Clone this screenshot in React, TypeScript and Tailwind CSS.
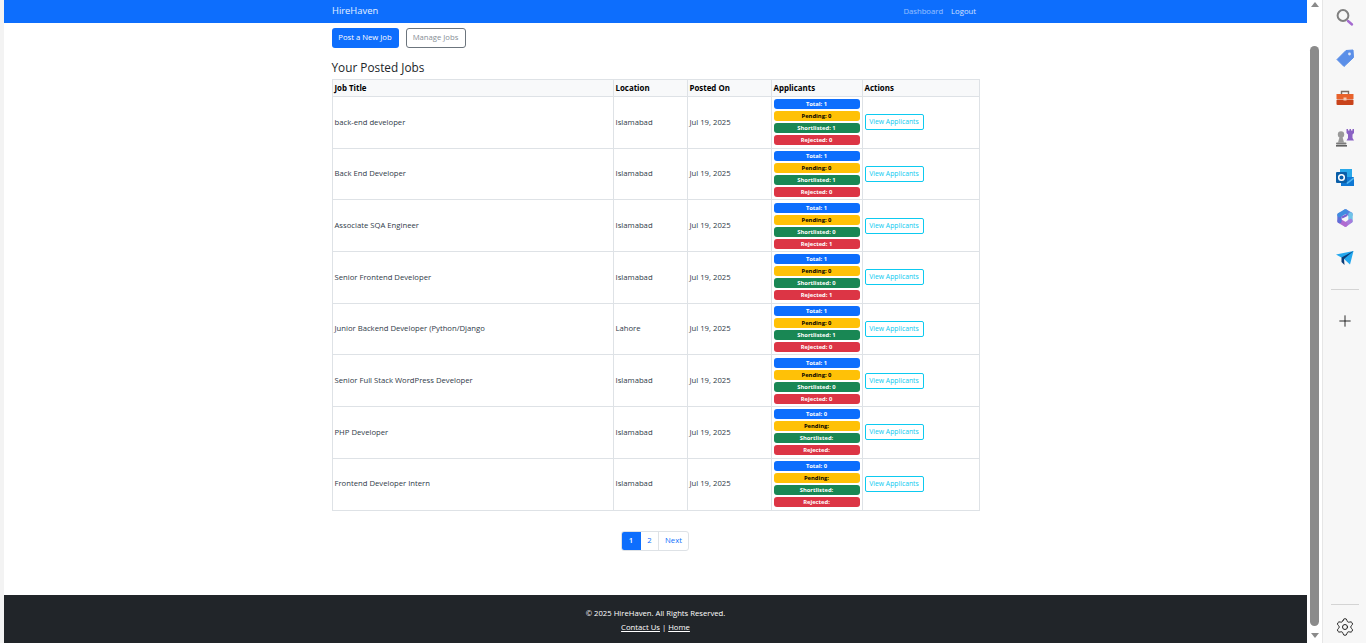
import { Plus, Settings } from "lucide-react";

type Job = {
  title: string;
  location: string;
  total: number;
  pending?: number;
  shortlisted?: number;
  rejected?: number;
};

const jobs: Job[] = [
  { title: "back-end developer", location: "Islamabad", total: 1, pending: 0, shortlisted: 1, rejected: 0 },
  { title: "Back End Developer", location: "Islamabad", total: 1, pending: 0, shortlisted: 1, rejected: 0 },
  { title: "Associate SQA Engineer", location: "Islamabad", total: 1, pending: 0, shortlisted: 0, rejected: 1 },
  { title: "Senior Frontend Developer", location: "Islamabad", total: 1, pending: 0, shortlisted: 0, rejected: 1 },
  { title: "Junior Backend Developer (Python/Django", location: "Lahore", total: 1, pending: 0, shortlisted: 1, rejected: 0 },
  { title: "Senior Full Stack WordPress Developer", location: "Islamabad", total: 1, pending: 0, shortlisted: 0, rejected: 0 },
  { title: "PHP Developer", location: "Islamabad", total: 0 },
  { title: "Frontend Developer Intern", location: "Islamabad", total: 0 },
];

function Badge({ className, children }: { className: string; children: React.ReactNode }) {
  return (
    <div className={`h-[10px] rounded-[3px] text-center text-[5.8px] font-bold leading-[10px] ${className}`}>
      {children}
    </div>
  );
}

function JobRow({ job }: { job: Job }) {
  return (
    <tr className="h-[51.7px] text-[#2f3a48]">
      <td className="border border-[#dee2e6] px-[2px] align-middle">{job.title}</td>
      <td className="border border-[#dee2e6] px-[2px] align-middle">{job.location}</td>
      <td className="border border-[#dee2e6] px-[2px] align-middle">Jul 19, 2025</td>
      <td className="border border-[#dee2e6] px-[2px] align-middle">
        <div className="flex flex-col gap-[2px]">
          <Badge className="bg-[#0d6efd] text-white">Total: {job.total}</Badge>
          <Badge className="bg-[#ffc107] text-black">Pending: {job.pending}</Badge>
          <Badge className="bg-[#198754] text-white">Shortlisted: {job.shortlisted}</Badge>
          <Badge className="bg-[#dc3545] text-white">Rejected: {job.rejected}</Badge>
        </div>
      </td>
      <td className="border border-[#dee2e6] px-[2px] align-middle">
        <button className="h-[16px] w-[59px] rounded-[2px] border border-[#0dcaf0] text-center text-[6.8px] leading-[14px] text-[#0dcaf0]">
          View Applicants
        </button>
      </td>
    </tr>
  );
}

function Sidebar() {
  return (
    <aside className="flex h-[643px] w-[44px] shrink-0 flex-col items-center border-l border-[#e6e6e6] bg-[#f7f7f7]">
      <div className="flex flex-col items-center gap-[20px] pt-[8px]">
        {/* search */}
        <svg width="20" height="20" viewBox="0 0 20 20" fill="none">
          <circle cx="8" cy="7.5" r="5.4" stroke="#808080" strokeWidth="2" />
          <path d="M13 13 17 16.5" stroke="#a56bd0" strokeWidth="2.4" strokeLinecap="round" />
        </svg>
        {/* tag */}
        <svg width="20" height="20" viewBox="0 0 20 20">
          <path d="M11 2.5 18 2 18.5 9.5 9 18.5 2 11.5Z" fill="#5b8fe8" stroke="#5b8fe8" strokeLinejoin="round" />
          <circle cx="14.5" cy="6" r="1.4" fill="#dfe6f5" />
        </svg>
        {/* toolbox */}
        <svg width="20" height="20" viewBox="0 0 20 20" fill="none">
          <path d="M6.5 6V3.5h7V6" stroke="#7a6a60" strokeWidth="1.4" />
          <rect x="1.5" y="6" width="17" height="5" fill="#e8622c" />
          <rect x="1.5" y="11.5" width="17" height="5.5" rx="1" fill="#c9431b" />
          <rect x="8.5" y="9.5" width="3" height="3" fill="#f2c9b4" />
        </svg>
        {/* chess pieces */}
        <svg width="20" height="20" viewBox="0 0 20 20">
          <path d="M11.5 1h1.5v1.5h1.5V1h1.5v1.5h1.5V1H19v4l-1.5 1.5V10L19 12.5H11.5L13 10V6.5L11.5 5Z" fill="#8a62c4" />
          <circle cx="6" cy="6.5" r="3.2" fill="#9a9a9a" />
          <path d="M4.5 9h3L9 14.5H3Z" fill="#9a9a9a" />
          <rect x="1" y="14.5" width="10.5" height="2" rx="1" fill="#7a7a7a" />
          <rect x="1" y="17" width="11" height="1.6" fill="#606060" />
        </svg>
        {/* outlook */}
        <svg width="20" height="20" viewBox="0 0 20 20">
          <rect x="5" y="1" width="12" height="9" fill="#28a8ea" />
          <path d="M6 9h13v9H6Z" fill="#0f78d4" />
          <path d="M6 9l6.5 5L19 9v2l-6.5 5L6 11Z" fill="#50b5ef" />
          <rect x="1" y="4" width="11" height="11" rx="1" fill="#0a5ea8" />
          <circle cx="6.5" cy="9.5" r="2.8" fill="none" stroke="#fff" strokeWidth="1.5" />
        </svg>
        {/* copilot hex */}
        <svg width="20" height="20" viewBox="0 0 20 20" fill="none">
          <path d="M10.5 3.5 15.5 6.5" stroke="#5a7fe0" strokeWidth="4.4" strokeLinecap="round" />
          <path d="M15.5 6.5V13" stroke="#6fc3e8" strokeWidth="4.4" strokeLinecap="round" />
          <path d="M15.5 13 10.5 16.5" stroke="#a77cdc" strokeWidth="4.4" strokeLinecap="round" />
          <path d="M10.5 16.5 4.5 13" stroke="#b06ad0" strokeWidth="4.4" strokeLinecap="round" />
          <path d="M4.5 13V7" stroke="#5f6fd8" strokeWidth="4.4" strokeLinecap="round" />
          <path d="M4.5 7 10.5 3.5" stroke="#3f8ce0" strokeWidth="4.4" strokeLinecap="round" />
          <path d="M7 9.5 12 7" stroke="#7a5fd0" strokeWidth="2" />
        </svg>
        {/* send */}
        <svg width="20" height="20" viewBox="0 0 20 20">
          <path d="M1 6.5 18.5 3 15 16.5 9 11Z" fill="#22a7ee" />
          <path d="M6.5 9.5 18.5 3 9 11 9.5 17 6.5 14Z" fill="#0b3c78" />
        </svg>
      </div>
      <div className="mt-[21px] h-px w-[28px] bg-[#d4d4d4]" />
      <Plus size={18} strokeWidth={1.1} className="mt-[22px] text-black" />
      <div className="mt-auto h-px w-[28px] bg-[#d4d4d4]" />
      <Settings size={20} strokeWidth={1.2} className="mb-[6px] mt-[12px] text-[#222]" />
    </aside>
  );
}

export default function App() {
  return (
    <div className="flex h-[643px] w-[1366px] overflow-hidden bg-white font-['Open_Sans','Noto_Sans',sans-serif] text-[7.7px]">
      <div className="w-[4px] shrink-0 bg-[#f3f3f3]" />

      <main className="flex w-[1303px] shrink-0 flex-col">
        <nav className="flex h-[23px] shrink-0 items-center bg-[#0d6efd] pl-[328px] pr-[331px]">
          <span className="text-[9.4px] text-white/90">HireHaven</span>
          <span className="ml-auto text-[7.7px] text-white/55">Dashboard</span>
          <span className="ml-[8px] text-[7.7px] text-white/80">Logout</span>
        </nav>

        <div className="mx-auto flex w-[648px] flex-1 flex-col">
          <div className="mt-[5px] flex gap-[7px]">
            <button className="h-[20px] w-[67px] rounded-[3px] bg-[#0d6efd] text-center text-[7.7px] text-white">
              Post a New Job
            </button>
            <button className="h-[20px] w-[60px] rounded-[3px] border border-[#6c757d] text-center text-[7.7px] text-[#868e96]">
              Manage Jobs
            </button>
          </div>

          <h2 className="mt-[11px] h-[20px] text-[11.8px] font-medium leading-[16px] text-[#212529]">Your Posted Jobs</h2>

          <table className="w-[647px] table-fixed border-collapse">
            <colgroup>
              <col className="w-[281px]" />
              <col className="w-[74px]" />
              <col className="w-[84px]" />
              <col className="w-[91px]" />
              <col className="w-[117px]" />
            </colgroup>
            <thead>
              <tr className="h-[17px] bg-[#f8f9fa] text-left text-[7.9px] text-black">
                <th className="border border-[#dee2e6] px-[2px] pt-[1px] font-bold">Job Title</th>
                <th className="border border-[#dee2e6] px-[2px] pt-[1px] font-bold">Location</th>
                <th className="border border-[#dee2e6] px-[2px] pt-[1px] font-bold">Posted On</th>
                <th className="border border-[#dee2e6] px-[2px] pt-[1px] font-bold">Applicants</th>
                <th className="border border-[#dee2e6] px-[2px] pt-[1px] font-bold">Actions</th>
              </tr>
            </thead>
            <tbody>
              {jobs.map((job) => (
                <JobRow key={job.title} job={job} />
              ))}
            </tbody>
          </table>

          <div className="mt-[20px] flex justify-center pr-[1px]">
            <div className="flex h-[20px] items-stretch overflow-hidden rounded-[3px] border border-[#dee2e6] text-[7.7px] text-[#0d6efd]">
              <span className="-my-px -ml-px flex w-[20px] items-center justify-center bg-[#0d6efd] font-semibold text-white">1</span>
              <span className="flex w-[17px] items-center justify-center">2</span>
              <span className="flex w-[30px] items-center justify-center border-l border-[#dee2e6]">Next</span>
            </div>
          </div>
        </div>

        <footer className="flex h-[48px] shrink-0 flex-col items-center bg-[#212529] pt-[12px] text-[7.7px] font-medium text-white">
          <p className="h-[14px] leading-[12px]">© 2025 HireHaven. All Rights Reserved.</p>
          <p className="leading-[12px]">
            <span className="underline">Contact Us</span> | <span className="underline">Home</span>
          </p>
        </footer>
      </main>

      {/* browser scrollbar */}
      <div className="flex h-[643px] w-[15px] shrink-0 flex-col items-center bg-white">
        <div className="mt-[2px] h-0 w-0 border-x-[4.5px] border-b-[5px] border-x-transparent border-b-[#8a8a8a]" />
        <div className="mt-[39px] h-[580px] w-[9px] rounded-[5px] bg-[#8b8b8b]" />
        <div className="mt-[7px] h-0 w-0 border-x-[4.5px] border-t-[5px] border-x-transparent border-t-[#8a8a8a]" />
      </div>

      <Sidebar />
    </div>
  );
}
